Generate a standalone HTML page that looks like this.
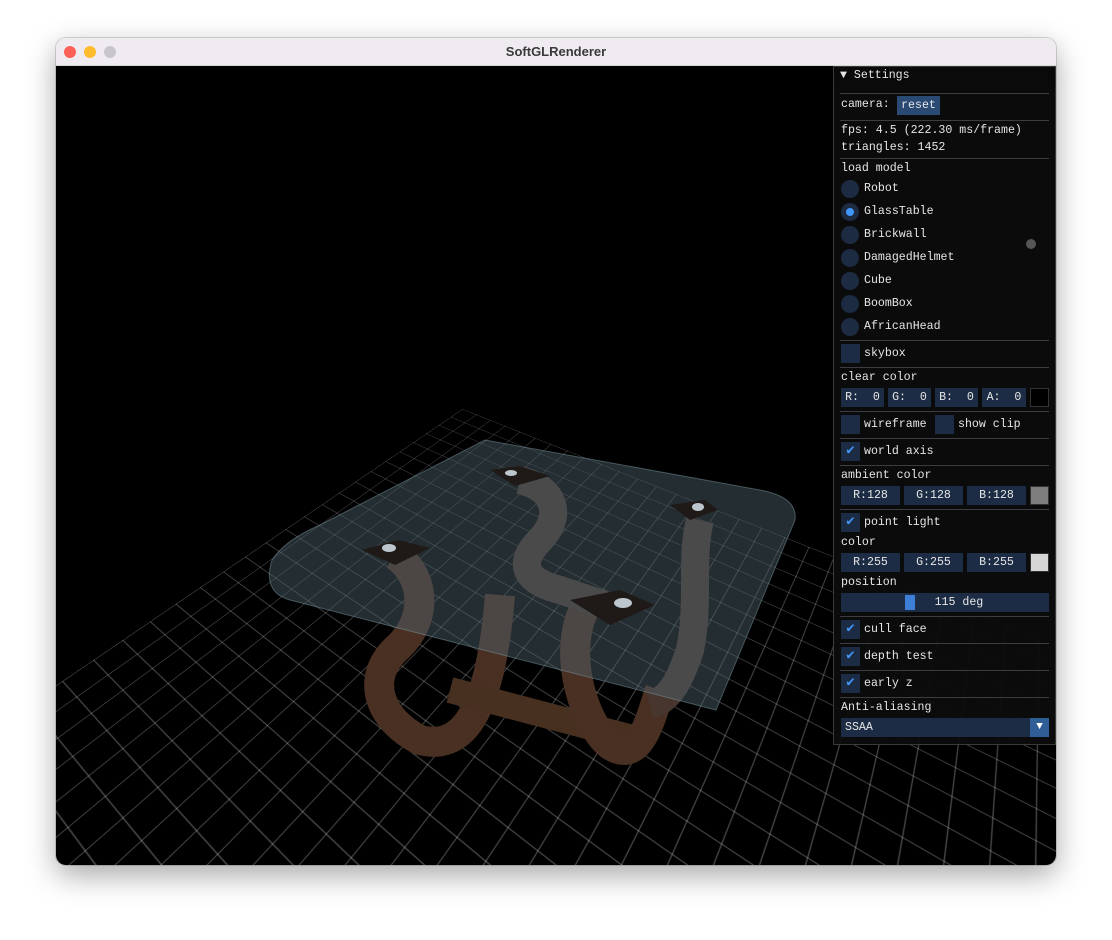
<!DOCTYPE html>
<html><head><meta charset="utf-8"><style>
*{margin:0;padding:0;box-sizing:border-box}
html,body{width:1112px;height:940px;overflow:hidden}
body{background:#fff;position:relative;font-family:"Liberation Mono",monospace}
#win{position:absolute;left:56px;top:38px;width:1000px;height:827px;border-radius:10px;overflow:hidden;box-shadow:0 10px 30px rgba(0,0,0,.35),0 0 0 1px rgba(0,0,0,.15)}
#tb{position:absolute;left:0;top:0;width:1000px;height:28px;background:#efebf1;border-bottom:1px solid #d8d4da}
#tb .t{position:absolute;left:0;width:100%;top:6px;text-align:center;font:bold 13px "Liberation Sans",sans-serif;color:#3a3a3a}
.dot{position:absolute;top:8px;width:12px;height:12px;border-radius:50%}
#vp{position:absolute;left:0;top:28px;width:1000px;height:799px;background:#000;overflow:hidden;perspective:700px;perspective-origin:470px 200px}
#grid{position:absolute;left:-30px;top:215px;width:1000px;height:1000px;transform-origin:50% 50%;transform:rotateX(70deg) rotateZ(35deg);
background-image:linear-gradient(rgba(255,255,255,.3) 1px,transparent 1px),linear-gradient(90deg,rgba(255,255,255,.3) 1px,transparent 1px);background-size:34px 34px}
svg.scene{position:absolute;left:0;top:0}
#panel{position:absolute;left:777px;top:0;width:223px;height:679px;background:rgba(12,12,12,.94);border:1px solid #3a3a3a;color:#e6e6e6;font-size:11.6px;line-height:14px}
#panel div{position:absolute}
.sep{left:6px;right:6px;height:1px;background:#3c3c42}
.fr{background:#1c2c44;height:19px}
.btn{background:#2a4a74}
.rad{width:18px;height:18px;border-radius:50%;background:#1c2a42;left:7px}
.cb{width:19px;height:19px;background:#1c2c44;left:7px}
.in{color:#e6e6e6;text-align:center;line-height:19px}
.ck{color:#4296fa;text-align:center;line-height:19px;font-size:14px}
</style></head><body>
<div id="win">
<div id="tb"><div class="dot" style="left:8px;background:#fe5f57"></div><div class="dot" style="left:28px;background:#febc2e"></div><div class="dot" style="left:48px;background:#c9c6cb"></div><div class="t">SoftGLRenderer</div></div>
<div id="vp">
<div id="grid"></div>
<svg class="scene" width="1000" height="799" viewBox="56 66 1000 799">
<g fill="none" stroke-linecap="butt">
<path d="M395 555 C 425 575 430 620 395 650 C 365 680 380 720 420 740 C 460 750 490 720 500 595" stroke="#4a3022" stroke-width="30"/>
<path d="M450 690 L640 740" stroke="#47301f" stroke-width="26"/>
<path d="M590 600 C 560 640 580 720 610 745 C 640 765 650 720 660 690" stroke="#4a3022" stroke-width="30"/>
<path d="M520 480 C 560 490 560 520 540 540 C 520 560 520 580 560 590 L 620 610" stroke="#46362e" stroke-width="28"/>
<path d="M700 520 C 690 560 700 600 690 650 C 680 680 670 700 650 705" stroke="#46362e" stroke-width="28"/>
</g>
<path d="M485 440 L760 490 Q798 497 795 520 L716 710 L290 600 Q262 592 272 560 Q285 540 320 525 Z" fill="rgba(80,100,110,.45)" stroke="rgba(120,150,160,.5)" stroke-width="1"/>
<g fill="#1f1a18"><path d="M362 550 L398 540 L430 548 L395 565 Z"/><path d="M490 470 L520 466 L550 476 L515 486 Z"/><path d="M670 505 L705 500 L718 510 L690 520 Z"/><path d="M570 600 L620 590 L655 605 L610 625 Z"/></g>
<g fill="#bcc6cc"><ellipse cx="389" cy="548" rx="7" ry="4"/><ellipse cx="511" cy="473" rx="6" ry="3"/><ellipse cx="698" cy="507" rx="6" ry="4"/><ellipse cx="623" cy="603" rx="9" ry="5"/></g>
</svg>
<div id="panel">
<div style="left:0;top:0;width:221px;height:19px;background:#0a0a0a"></div>
<div style="left:6px;top:2px">▼ Settings</div>
<div class="sep" style="top:26px"></div>
<div style="left:7px;top:31px">camera:</div>
<div class="btn in" style="left:63px;top:29px;width:43px">reset</div>
<div class="sep" style="top:53px"></div>
<div style="left:7px;top:57px">fps: 4.5 (222.30 ms/frame)</div>
<div style="left:7px;top:74px">triangles: 1452</div>
<div class="sep" style="top:91px"></div>
<div style="left:7px;top:95px">load model</div>
<div class="rad" style="top:113px"></div><div style="left:30px;top:115px">Robot</div>
<div class="rad" style="top:136px"></div><div style="left:12px;top:141px;width:8px;height:8px;border-radius:50%;background:#4296fa"></div><div style="left:30px;top:138px">GlassTable</div>
<div class="rad" style="top:159px"></div><div style="left:30px;top:161px">Brickwall</div>
<div class="rad" style="top:182px"></div><div style="left:30px;top:184px">DamagedHelmet</div>
<div class="rad" style="top:205px"></div><div style="left:30px;top:207px">Cube</div>
<div class="rad" style="top:228px"></div><div style="left:30px;top:230px">BoomBox</div>
<div class="rad" style="top:251px"></div><div style="left:30px;top:253px">AfricanHead</div>
<div style="left:192px;top:172px;width:10px;height:10px;border-radius:50%;background:#555"></div>
<div class="sep" style="top:273px"></div>
<div class="cb" style="top:277px"></div><div style="left:30px;top:280px">skybox</div>
<div class="sep" style="top:300px"></div>
<div style="left:7px;top:304px">clear color</div>
<div class="fr in" style="left:7px;top:321px;width:43px">R:&nbsp;&nbsp;0</div>
<div class="fr in" style="left:54px;top:321px;width:43px">G:&nbsp;&nbsp;0</div>
<div class="fr in" style="left:101px;top:321px;width:43px">B:&nbsp;&nbsp;0</div>
<div class="fr in" style="left:148px;top:321px;width:44px">A:&nbsp;&nbsp;0</div>
<div style="left:196px;top:321px;width:19px;height:19px;background:#000;border:1px solid #333"></div>
<div class="sep" style="top:344px"></div>
<div class="cb" style="top:348px"></div><div style="left:30px;top:351px">wireframe</div>
<div class="cb" style="left:101px;top:348px"></div><div style="left:124px;top:351px">show clip</div>
<div class="sep" style="top:371px"></div>
<div class="cb ck" style="top:375px">✔</div><div style="left:30px;top:378px">world axis</div>
<div class="sep" style="top:398px"></div>
<div style="left:7px;top:402px">ambient color</div>
<div class="fr in" style="left:7px;top:419px;width:59px">R:128</div>
<div class="fr in" style="left:70px;top:419px;width:59px">G:128</div>
<div class="fr in" style="left:133px;top:419px;width:59px">B:128</div>
<div style="left:196px;top:419px;width:19px;height:19px;background:#7d7d7d;border:1px solid #333"></div>
<div class="sep" style="top:442px"></div>
<div class="cb ck" style="top:446px">✔</div><div style="left:30px;top:449px">point light</div>
<div style="left:7px;top:469px">color</div>
<div class="fr in" style="left:7px;top:486px;width:59px">R:255</div>
<div class="fr in" style="left:70px;top:486px;width:59px">G:255</div>
<div class="fr in" style="left:133px;top:486px;width:59px">B:255</div>
<div style="left:196px;top:486px;width:19px;height:19px;background:#d6d6d6;border:1px solid #333"></div>
<div style="left:7px;top:509px">position</div>
<div class="fr in" style="left:7px;top:526px;width:208px">&nbsp;&nbsp;&nbsp;&nbsp;115 deg</div>
<div style="left:71px;top:528px;width:10px;height:15px;background:#3d7fd6"></div>
<div class="sep" style="top:549px"></div>
<div class="cb ck" style="top:553px">✔</div><div style="left:30px;top:556px">cull face</div>
<div class="sep" style="top:576px"></div>
<div class="cb ck" style="top:580px">✔</div><div style="left:30px;top:583px">depth test</div>
<div class="sep" style="top:603px"></div>
<div class="cb ck" style="top:607px">✔</div><div style="left:30px;top:610px">early z</div>
<div class="sep" style="top:630px"></div>
<div style="left:7px;top:634px">Anti-aliasing</div>
<div class="fr" style="left:7px;top:651px;width:208px"></div>
<div style="left:11px;top:654px">SSAA</div>
<div style="left:196px;top:651px;width:19px;height:19px;background:#2f5d96;color:#fff;text-align:center;line-height:19px;font-size:11px">▼</div>
</div>
</div>
</div>
</body></html>
